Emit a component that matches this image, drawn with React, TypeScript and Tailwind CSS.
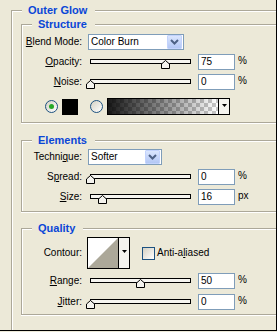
import type { ReactNode } from 'react';

const GRAY = 'border-[#aca899]';

function Group({ title, children, className = '', bodyClass = '' }: { title: string; children: ReactNode; className?: string; bodyClass?: string }) {
  return (
    <div className={`flex flex-col ${className}`}>
      <div className="flex h-[14px] shrink-0">
        <div className={`w-[11px] mt-[7px] border-t border-l ${GRAY} shadow-[inset_1px_1px_0_#fff]`} />
        <span className="pl-[6px] pr-[8px] text-[11px] font-bold leading-[14px] text-[#0a46d7]">{title}</span>
        <div className={`flex-1 mt-[7px] border-t ${GRAY} shadow-[inset_0_1px_0_#fff]`} />
      </div>
      <div className={`border-l ${GRAY} ${bodyClass}`}>{children}</div>
    </div>
  );
}

function Label({ children }: { children: ReactNode }) {
  return <span className="w-[60px] shrink-0 text-right leading-[12px]">{children}</span>;
}

function U({ children }: { children: ReactNode }) {
  return <span className="underline underline-offset-[1px]">{children}</span>;
}

function Chevron() {
  return (
    <div className="mr-px flex h-[14px] w-[15px] items-center justify-center rounded-[1px] border border-[#c3d3fd] bg-linear-to-b from-[#dbe6fe] to-[#b3c7f5]">
      <svg width="9" height="6" viewBox="0 0 9 6">
        <path d="M1 1 L4.5 4.5 L8 1" fill="none" stroke="#4d6185" strokeWidth="2" />
      </svg>
    </div>
  );
}

function Select({ value, width }: { value: string; width: string }) {
  return (
    <div className={`ml-[6px] flex h-[16px] items-center border border-[#7f9db9] bg-white ${width}`}>
      <span className="flex-1 pl-[2px] leading-[12px]">{value}</span>
      <Chevron />
    </div>
  );
}

function Slider({ pos }: { pos: number }) {
  return (
    <div className="relative ml-[6px] h-[16px] w-[110px] shrink-0">
      <div className="ml-[2px] mt-[5px] h-[5px] w-[101px] border border-black bg-[#f6f5f0]" />
      <svg className="absolute top-[6px]" style={{ left: pos - 2 }} width="9" height="9" viewBox="0 0 9 9">
        <path d="M0.5 4 L4.5 0.5 L8.5 4 L8.5 8.5 L0.5 8.5 Z" fill="#f4f3ee" stroke="#000" />
      </svg>
    </div>
  );
}

function Field({ value }: { value: string }) {
  return (
    <div className="h-[16px] w-[37px] shrink-0 border border-[#7f9db9] bg-white pl-[2px] leading-[14px]">{value}</div>
  );
}

function SliderRow({ label, pos, value, unit, className = '' }: { label: ReactNode; pos: number; value: string; unit: string; className?: string }) {
  return (
    <div className={`flex h-[16px] items-center ${className}`}>
      <Label>{label}</Label>
      <Slider pos={pos} />
      <Field value={value} />
      <span className="ml-[3px] -mt-[3px] leading-[10px]">{unit}</span>
    </div>
  );
}

function Radio({ checked }: { checked?: boolean }) {
  return (
    <div className="flex h-[13px] w-[13px] shrink-0 items-center justify-center rounded-full border border-[#1c5180] bg-linear-to-br from-[#d4d1c4] to-white">
      {checked && <div className="h-[5px] w-[5px] rounded-full bg-[#26a826]" />}
    </div>
  );
}

function DownArrow() {
  return (
    <svg width="5" height="3" viewBox="0 0 5 3">
      <path d="M0 0 H5 L2.5 3 Z" fill="#000" />
    </svg>
  );
}

export default function App() {
  return (
    <div className="h-[332px] w-[277px] bg-[#ece9d8] font-['Liberation_Sans',Arial,sans-serif] text-[10px] text-black">
      <div className="flex h-[331px] flex-col border-r border-b border-black">
        <Group title="Outer Glow" className="ml-[11px] mt-[3px] flex-1" bodyClass="flex-1 pl-[9px] shadow-[inset_1px_0_0_#fff]">
          <Group title="Structure" bodyClass="border-b pb-[7px] shadow-[inset_1px_0_0_#fff,0_1px_0_#fff]">
            <div className="mt-[3px] flex h-[16px] items-center">
              <Label>
                <U>B</U>lend Mode:
              </Label>
              <Select value="Color Burn" width="w-[96px]" />
            </div>
            <SliderRow className="mt-[4px]" label={<><U>O</U>pacity:</>} pos={75} value="75" unit="%" />
            <SliderRow className="mt-[4px]" label={<><U>N</U>oise:</>} pos={0} value="0" unit="%" />
            <div className="mt-[8px] flex h-[17px] items-center">
              <div className="ml-[23px]">
                <Radio checked />
              </div>
              <div className="ml-[4px] h-[16px] w-[16px] bg-black" />
              <div className="ml-[12px]">
                <Radio />
              </div>
              <div className="ml-[4px] flex h-[17px] w-[123px] border border-black">
                <div className="flex-1 bg-[repeating-conic-gradient(#c8c8c8_0_25%,#fff_0_50%)] bg-[length:8px_8px]">
                  <div className="h-full w-full bg-linear-to-r from-black/90 to-transparent" />
                </div>
                <div className="flex w-[11px] justify-center border-l border-black bg-[#f4f3ee] pt-[5px]">
                  <DownArrow />
                </div>
              </div>
            </div>
          </Group>

          <Group title="Elements" className="mt-[10px]" bodyClass="border-b pb-[6px] shadow-[inset_1px_0_0_#fff,0_1px_0_#fff]">
            <div className="mt-[2px] flex h-[16px] items-center">
              <Label>
                Techni<U>q</U>ue:
              </Label>
              <Select value="Softer" width="w-[74px]" />
            </div>
            <SliderRow className="mt-[4px]" label={<>S<U>p</U>read:</>} pos={0} value="0" unit="%" />
            <SliderRow className="mt-[4px]" label={<><U>S</U>ize:</>} pos={12} value="16" unit="px" />
          </Group>

          <Group title="Quality" className="mt-[9px]" bodyClass="border-b pb-[4px] shadow-[inset_1px_0_0_#fff,0_1px_0_#fff]">
            <div className="mt-[2px] flex h-[32px] items-center">
              <Label>Contour:</Label>
              <div className="ml-[5px] flex h-[32px] w-[43px] border border-black">
                <svg width="30" height="30" viewBox="0 0 30 30" className="bg-white">
                  <path d="M0 30 L30 0 L30 30 Z" fill="#aca899" />
                </svg>
                <div className="flex flex-1 justify-center border-l border-black bg-[#f4f3ee] pt-[12px]">
                  <DownArrow />
                </div>
              </div>
              <div className="ml-[12px] h-[13px] w-[13px] border border-[#1c5180] bg-linear-to-br from-[#d4d1c4] to-white" />
              <span className="ml-[2px] leading-[12px]">
                Anti-a<U>l</U>iased
              </span>
            </div>
            <SliderRow className="mt-[4px]" label={<><U>R</U>ange:</>} pos={50} value="50" unit="%" />
            <SliderRow className="mt-[5px]" label={<><U>J</U>itter:</>} pos={0} value="0" unit="%" />
          </Group>
        </Group>
      </div>
    </div>
  );
}
